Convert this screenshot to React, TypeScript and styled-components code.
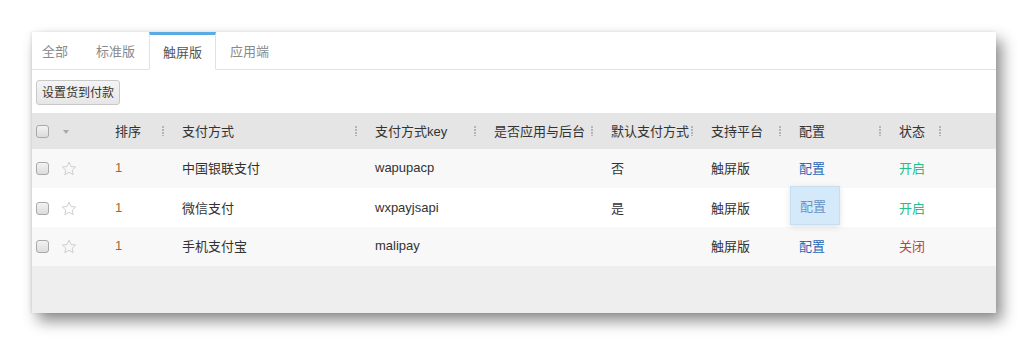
import React from "react";
import styled, { createGlobalStyle, css } from "styled-components";

const GlobalStyle = createGlobalStyle`
  html, body {
    margin: 0;
    padding: 0;
    background: #fff;
  }
  body {
    font-family: "Liberation Sans", "Noto Sans CJK SC", sans-serif;
    font-size: 13px;
    color: #333;
  }
`;

const Page = styled.div`
  padding: 32px;
`;

const Panel = styled.div`
  width: 964px;
  background: #fff;
  box-shadow: 6px 8px 14px rgba(0, 0, 0, 0.45), -1px 0 3px rgba(0, 0, 0, 0.1);
`;

const TabBar = styled.div`
  display: flex;
  height: 37px;
  border-bottom: 1px solid #e2e2e2;
`;

const Tab = styled.div<{ $active?: boolean }>`
  display: flex;
  align-items: center;
  padding: 0 14px 2px;
  color: #8a8a8a;
  margin-bottom: -1px;
  cursor: pointer;
  &:first-child {
    padding-left: 10px;
  }
  ${({ $active }) =>
    $active &&
    css`
      color: #555;
      padding: 0 13px 2px;
      height: 38px;
      box-sizing: border-box;
      background: #fff;
      border-top: 3px solid #5aaae4;
      border-left: 1px solid #e2e2e2;
      border-right: 1px solid #e2e2e2;
      border-bottom: 1px solid #fff;
    `}
`;

const Toolbar = styled.div`
  height: 43px;
  display: flex;
  align-items: center;
  padding: 0 4px;
`;

const Button = styled.button`
  height: 25px;
  width: 84px;
  padding: 0 0 1px;
  font-family: inherit;
  font-size: 12px;
  color: #333;
  background: linear-gradient(#f4f4f4, #e6e6e6);
  border: 1px solid #c8c8c8;
  border-radius: 3px;
  margin-top: 1px;
`;

const COLS = "24px 41px 67px 193px 119px 117px 100px 88px 100px 60px 1fr";

const HeadRow = styled.div`
  display: grid;
  grid-template-columns: ${COLS};
  height: 36px;
  background: #e5e5e5;
`;

const Row = styled.div<{ $odd: boolean }>`
  display: grid;
  grid-template-columns: ${COLS};
  height: 39px;
  background: ${({ $odd }) => ($odd ? "#f8f8f8" : "#fff")};
`;

const Cell = styled.div<{ $pad?: number }>`
  position: relative;
  display: flex;
  align-items: center;
  padding-left: ${({ $pad }) => ($pad ?? 18)}px;
  padding-bottom: 2px;
  white-space: nowrap;
`;

const Grip = styled.span`
  position: absolute;
  right: 0;
  top: 50%;
  margin-top: -5px;
  width: 2px;
  height: 10px;
  background: repeating-linear-gradient(#b4b4b4 0 2px, transparent 2px 3px);
`;

const Check = styled.span`
  display: inline-block;
  width: 11px;
  height: 11px;
  margin-top: 2px;
  border: 1px solid #a9a9a9;
  border-radius: 3px;
  background: linear-gradient(#f2f2f2, #dcdcdc);
`;

const Caret = styled.span`
  width: 0;
  height: 0;
  margin-left: 1px;
  margin-top: 3px;
  border-left: 3.5px solid transparent;
  border-right: 3.5px solid transparent;
  border-top: 4px solid #a8a8a8;
`;

const Num = styled.span`
  color: #9b6b36;
`;

const Link = styled.a<{ $hover?: boolean }>`
  color: #2a67b8;
  text-decoration: none;
  ${({ $hover }) =>
    $hover &&
    css`
      position: relative;
      top: -2px;
      margin-left: -9px;
      width: 50px;
      height: 39px;
      box-sizing: border-box;
      display: flex;
      align-items: center;
      padding: 0 0 1px 9px;
      background: #d4eafb;
      border: 1px solid #c6def0;
      color: #6a93c6;
      box-shadow: 0 2px 6px rgba(0, 0, 0, 0.12);
    `}
`;

const Status = styled.span<{ $on: boolean }>`
  color: ${({ $on }) => ($on ? "#25c08c" : "#c0433a")};
`;

const Filler = styled.div`
  height: 47px;
  background: #eeeeee;
`;

const Star = () => (
  <svg width="16" height="16" viewBox="0 0 16 16" style={{ marginTop: 2 }}>
    <path
      d="M8 1.2l2 4.3 4.6.5-3.4 3.1 1 4.6L8 11.3l-4.2 2.4 1-4.6L1.4 6l4.6-.5z"
      fill="none"
      stroke="#cfcfcf"
      strokeWidth="1"
      strokeLinejoin="round"
    />
  </svg>
);

const headers = [
  "排序",
  "支付方式",
  "支付方式key",
  "是否应用与后台",
  "默认支付方式",
  "支持平台",
  "配置",
  "状态",
];

const rows = [
  { name: "中国银联支付", key: "wapupacp", def: "否", on: true },
  { name: "微信支付", key: "wxpayjsapi", def: "是", on: true, hover: true },
  { name: "手机支付宝", key: "malipay", def: "", on: false },
];

const tabs = ["全部", "标准版", "触屏版", "应用端"];

const App = () => (
  <Page>
    <GlobalStyle />
    <Panel>
      <TabBar>
        {tabs.map((t) => (
          <Tab key={t} $active={t === "触屏版"}>
            {t}
          </Tab>
        ))}
      </TabBar>
      <Toolbar>
        <Button>设置货到付款</Button>
      </Toolbar>
      <HeadRow>
        <Cell $pad={4}>
          <Check />
        </Cell>
        <Cell $pad={6}>
          <Caret />
        </Cell>
        {headers.map((h) => (
          <Cell key={h}>
            {h}
            <Grip />
          </Cell>
        ))}
        <Cell />
      </HeadRow>
      {rows.map((r, i) => (
        <Row key={r.key} $odd={i % 2 === 0}>
          <Cell $pad={4}>
            <Check />
          </Cell>
          <Cell $pad={5}>
            <Star />
          </Cell>
          <Cell>
            <Num>1</Num>
          </Cell>
          <Cell>{r.name}</Cell>
          <Cell>{r.key}</Cell>
          <Cell />
          <Cell>{r.def}</Cell>
          <Cell>触屏版</Cell>
          <Cell>
            <Link href="#" $hover={r.hover}>
              配置
            </Link>
          </Cell>
          <Cell>
            <Status $on={r.on}>{r.on ? "开启" : "关闭"}</Status>
          </Cell>
          <Cell />
        </Row>
      ))}
      <Filler />
    </Panel>
  </Page>
);

export default App;
